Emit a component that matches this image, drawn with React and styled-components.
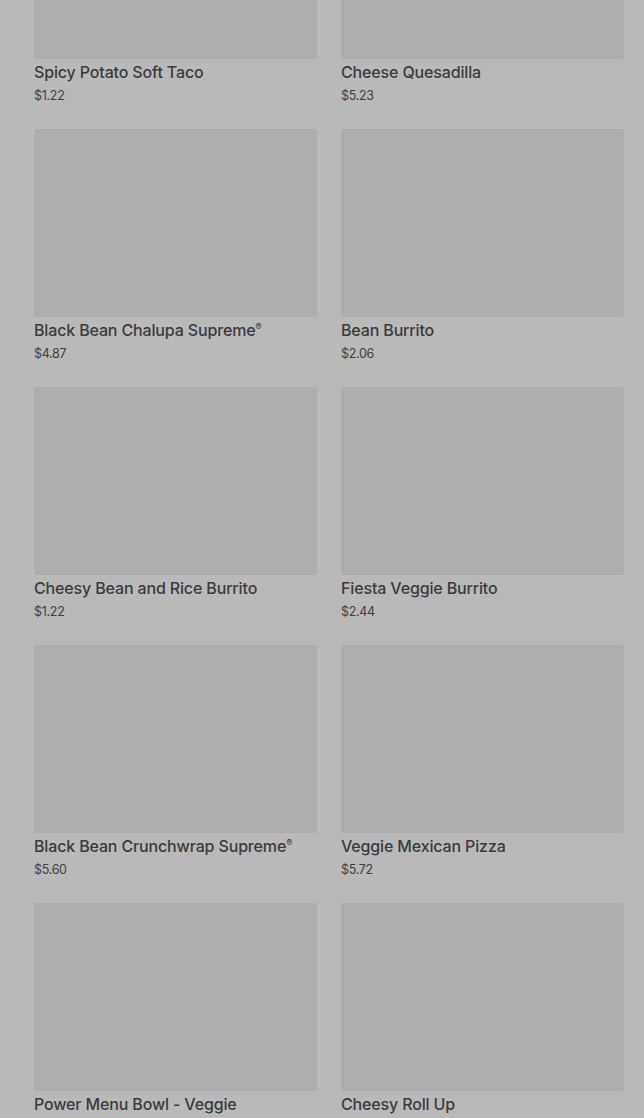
import styled, { createGlobalStyle } from 'styled-components';

const GlobalStyle = createGlobalStyle`
  html, body {
    margin: 0;
    padding: 0;
    background: #b9b9b9;
    overflow: hidden;
  }
  body {
    font-family: Inter, "Noto Sans", sans-serif;
  }
`

const items = [
  { name: 'Spicy Potato Soft Taco', price: '$1.22' },
  { name: 'Cheese Quesadilla', price: '$5.23' },
  { name: 'Black Bean Chalupa Supreme®', price: '$4.87' },
  { name: 'Bean Burrito', price: '$2.06' },
  { name: 'Cheesy Bean and Rice Burrito', price: '$1.22' },
  { name: 'Fiesta Veggie Burrito', price: '$2.44' },
  { name: 'Black Bean Crunchwrap Supreme®', price: '$5.60' },
  { name: 'Veggie Mexican Pizza', price: '$5.72' },
  { name: 'Power Menu Bowl - Veggie', price: '$6.49' },
  { name: 'Cheesy Roll Up', price: '$1.49' },
]

const Page = styled.div`
  height: 1118px;
  overflow: hidden;
  background: #b9b9b9;
`

const Grid = styled.div`
  display: grid;
  grid-template-columns: 283px 283px;
  column-gap: 24px;
  row-gap: 23px;
  padding: 0 20px 0 34px;
  margin-top: -129px;
`

const Card = styled.div`
  display: flex;
  flex-direction: column;
`

const Thumb = styled.div`
  height: 188px;
  background: #adadad;
  border-radius: 2px;
`

const Title = styled.div`
  margin-top: 3px;
  height: 20px;
  font-size: 16px;
  line-height: 20px;
  font-weight: 500;
  color: #3b3b3b;
  letter-spacing: -0.15px;
  white-space: nowrap;
  sup {
    font-size: 9px;
    line-height: 0;
    vertical-align: 6px;
  }
`

const Price = styled.div`
  margin-top: 4px;
  font-size: 12.5px;
  line-height: 20px;
  color: #3f3f3f;
  letter-spacing: -0.3px;
`

const renderName = (name) => {
  if (!name.endsWith('®')) return name
  return <>{name.slice(0, -1)}<sup>®</sup></>
}

const App = () => {
  return (
    <Page>
      <GlobalStyle />
      <Grid>
        {items.map((item) => (
          <Card key={item.name}>
            <Thumb />
            <Title>{renderName(item.name)}</Title>
            <Price>{item.price}</Price>
          </Card>
        ))}
      </Grid>
    </Page>
  );
}

export default App
